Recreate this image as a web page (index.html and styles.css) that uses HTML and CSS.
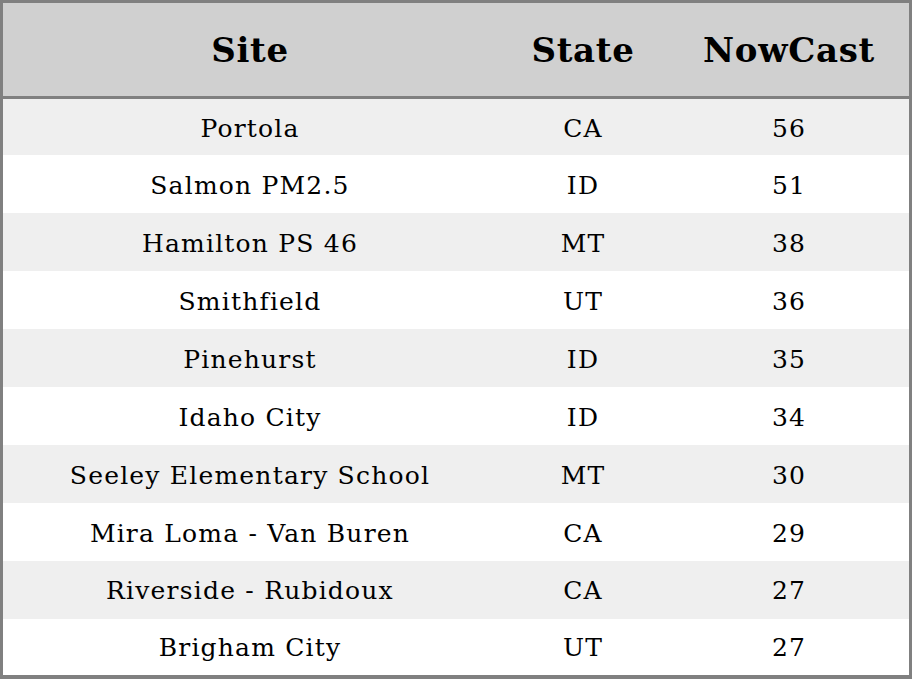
FILE: index.html
```html
<!DOCTYPE html>
<html>
<head>
<meta charset="utf-8">
<link rel="stylesheet" href="styles.css">
</head>
<body>
<table class="aq">
<thead>
<tr><th class="c-site">Site</th><th class="c-state">State</th><th class="c-now">NowCast</th></tr>
</thead>
<tbody>
<tr><td>Portola</td><td>CA</td><td>56</td></tr>
<tr><td>Salmon PM2.5</td><td>ID</td><td>51</td></tr>
<tr><td>Hamilton PS 46</td><td>MT</td><td>38</td></tr>
<tr><td>Smithfield</td><td>UT</td><td>36</td></tr>
<tr><td>Pinehurst</td><td>ID</td><td>35</td></tr>
<tr><td>Idaho City</td><td>ID</td><td>34</td></tr>
<tr><td>Seeley Elementary School</td><td>MT</td><td>30</td></tr>
<tr><td>Mira Loma - Van Buren</td><td>CA</td><td>29</td></tr>
<tr><td>Riverside - Rubidoux</td><td>CA</td><td>27</td></tr>
<tr><td>Brigham City</td><td>UT</td><td>27</td></tr>
</tbody>
</table>
</body>
</html>
```
FILE: styles.css
```css
html, body {
  margin: 0;
  padding: 0;
  background: #fff;
}
.aq {
  width: 912px;
  height: 679px;
  border-collapse: collapse;
  border: 3px solid #808080;
  border-bottom-width: 4px;
  font-family: "DejaVu Serif", serif;
  color: #000;
  table-layout: fixed;
  box-sizing: border-box;
}
.aq th {
  height: 93px;
  background: #d0d0d0;
  font-size: 34px;
  letter-spacing: 0.7px;
  font-weight: bold;
  text-align: center;
  border-bottom: 3px solid #808080;
  padding: 0;
}
.c-site { width: 494px; }
.c-state { width: 172px; }
.c-now { width: 240px; }
.aq td {
  height: 57.6px;
  font-size: 25px;
  letter-spacing: 1.2px;
  text-align: center;
  padding: 2px 0 0 0;
  box-sizing: border-box;
}
.aq tbody tr:nth-child(odd) td {
  background: #efefef;
}
```
